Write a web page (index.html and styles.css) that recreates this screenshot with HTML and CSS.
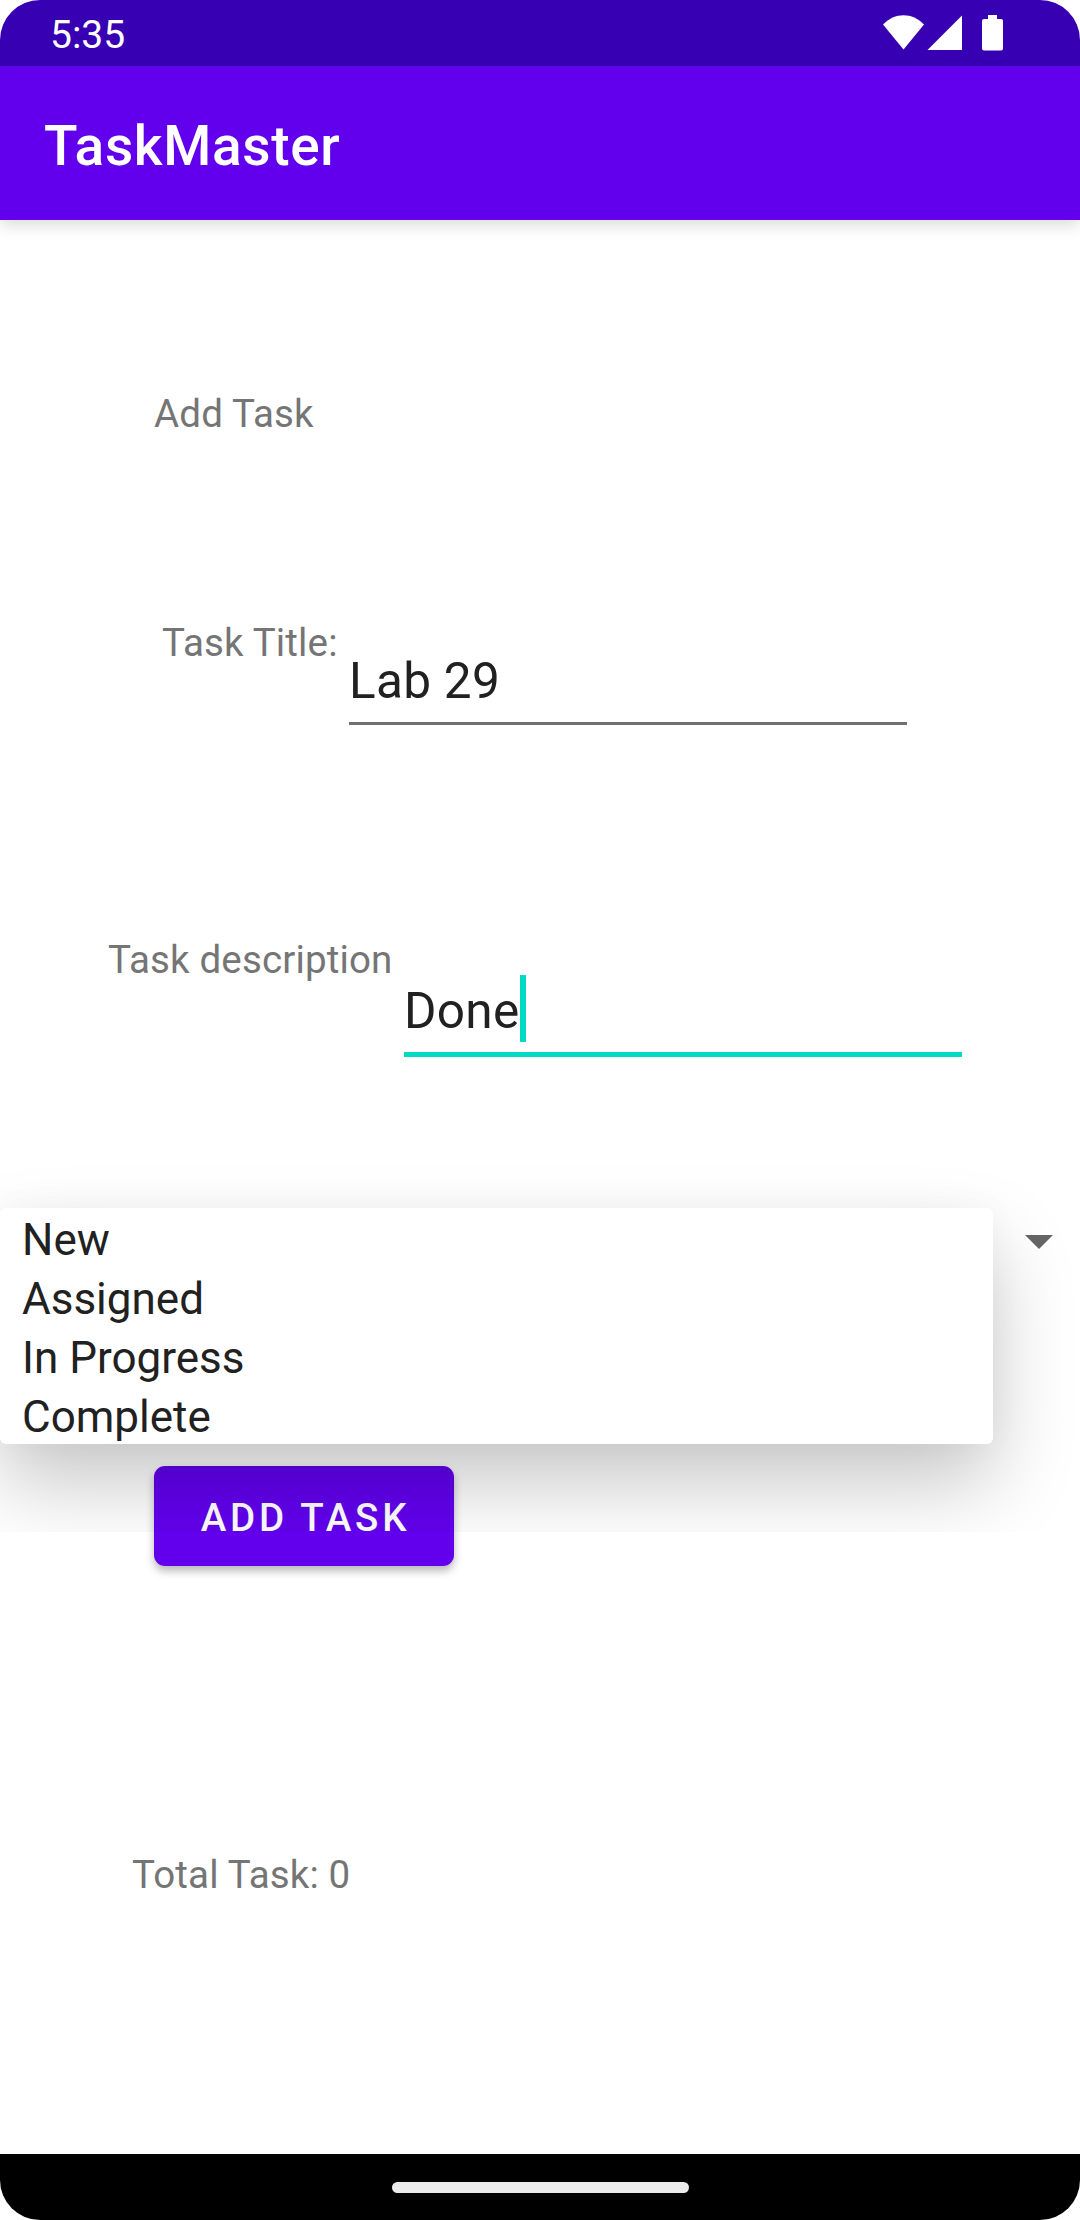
FILE: index.html
```html
<!DOCTYPE html>
<html lang="en">
<head>
<meta charset="utf-8">
<title>TaskMaster</title>
<link rel="stylesheet" href="styles.css">
</head>
<body>
<div class="screen">
  <header class="status-bar">
    <span class="clock">5:35</span>
    <svg class="status-icons" width="122" height="38" viewBox="0 0 122 38" fill="#fff">
      <path d="M0 10.5C11.500-2 29.500-2 41 10.500L20.500 35.500Z"/>
      <path d="M44.500 36H79V1.500Z"/>
      <path d="M105 1h9v4h4a2 2 0 0 1 2 2v27.500a2 2 0 0 1-2 2h-17a2 2 0 0 1-2-2V7a2 2 0 0 1 2-2h4z"/>
    </svg>
  </header>
  <div class="app-bar"><h1 class="app-title">TaskMaster</h1></div>
  <main class="content">
    <h2 class="label heading">Add Task</h2>
    <div class="field field-title">
      <span class="label">Task Title:</span>
      <div class="input">Lab 29</div>
    </div>
    <div class="field field-description">
      <span class="label">Task description</span>
      <div class="input input-focused">Done<span class="caret"></span></div>
    </div>
    <div class="spinner">
      <svg class="arrow" width="28" height="14" viewBox="0 0 28 14"><path d="M0 0H28L14 14Z" fill="#666"/></svg>
      <ul class="menu">
        <li>New</li>
        <li>Assigned</li>
        <li>In Progress</li>
        <li>Complete</li>
      </ul>
    </div>
    <button class="add-button">ADD TASK</button>
    <p class="label total">Total Task: 0</p>
  </main>
  <footer class="nav-bar"><div class="nav-handle"></div></footer>
</div>
</body>
</html>
```
FILE: styles.css
```css
* { box-sizing: border-box; }

body {
  margin: 0;
  background: #fff;
  font-family: Roboto, sans-serif;
}

.screen {
  width: 1080px;
  height: 2220px;
  display: flex;
  flex-direction: column;
  overflow: hidden;
  border-radius: 40px;
  background: #fff;
}

.status-bar {
  height: 66px;
  flex: none;
  display: flex;
  justify-content: space-between;
  align-items: flex-start;
  padding: 14px 75px 0 50px;
  background: #3700b3;
  color: #fff;
}

.clock {
  font-size: 39px;
  line-height: 42px;
}

.app-bar {
  position: relative;
  height: 154px;
  flex: none;
  display: flex;
  align-items: center;
  padding: 5px 44px 0;
  background: #6200ee;
  color: #fff;
  box-shadow: 0 6px 14px rgba(0, 0, 0, .13);
}

.app-title {
  margin: 0;
  font-size: 55px;
  line-height: 64px;
  font-weight: 500;
  letter-spacing: .65px;
}

.content {
  flex: 1;
  display: flex;
  flex-direction: column;
  align-items: flex-start;
}

.label {
  margin: 0;
  color: #757575;
  font-size: 38.5px;
  line-height: 52px;
  font-weight: 400;
  letter-spacing: .15px;
  white-space: nowrap;
}

.heading { margin: 168px 0 0 154px; }

.field {
  display: flex;
  align-items: flex-start;
}

.field-title {
  height: 108px;
  margin: 177px 0 0 162px;
}

.field-description {
  height: 123px;
  margin: 209px 0 0 108px;
}

.field .input {
  width: 558px;
  margin-left: auto;
  color: #212121;
  font-size: 49.5px;
  line-height: 66px;
  letter-spacing: .3px;
  border-bottom: 3px solid #707070;
}

.field-title { width: 745px; }
.field-title .input { height: 92px; margin-top: 16px; padding-top: 15px; }

.field-description { width: 854px; }
.field-description .input {
  display: flex;
  height: 107px;
  margin-top: 16px;
  padding-top: 28px;
  border-bottom: 5px solid #03dac5;
}

.caret {
  width: 6px;
  height: 67px;
  margin-top: -3px;
  background: #03dac5;
}

.spinner {
  position: relative;
  width: 1080px;
  height: 66px;
  display: flex;
  justify-content: flex-end;
  margin-top: 151px;
  padding: 27px 27px 0 0;
}

/* The open list floats over the form, and its shadow ends with the popup window. */
.menu {
  position: absolute;
  left: 0;
  top: 0;
  z-index: 1;
  width: 993px;
  height: 236px;
  margin: 0;
  padding: 3px 22px 0;
  list-style: none;
  border-radius: 6px;
  background: #fff;
  color: #212121;
  font-size: 44px;
  line-height: 59px;
  box-shadow: 0 40px 82px rgba(0, 0, 0, .22), 0 0 36px rgba(0, 0, 0, .03);
  clip-path: inset(-88px -88px -88px 0);
}

.menu li { height: 59px; }

.add-button {
  width: 300px;
  height: 100px;
  margin: 192px 0 0 154px;
  padding: 4px 0 0 3px;
  border: 0;
  border-radius: 11px;
  background: #6200ee;
  color: #fff;
  font: 500 38.5px/52px Roboto, sans-serif;
  letter-spacing: 3.8px;
  box-shadow: 0 5px 9px rgba(0, 0, 0, .28);
}

.total { margin: 283px 0 0 132px; }

.nav-bar {
  height: 66px;
  flex: none;
  display: flex;
  justify-content: center;
  align-items: center;
  background: #000;
}

.nav-handle {
  width: 297px;
  height: 11px;
  border-radius: 6px;
  background: #ebebeb;
}
```
